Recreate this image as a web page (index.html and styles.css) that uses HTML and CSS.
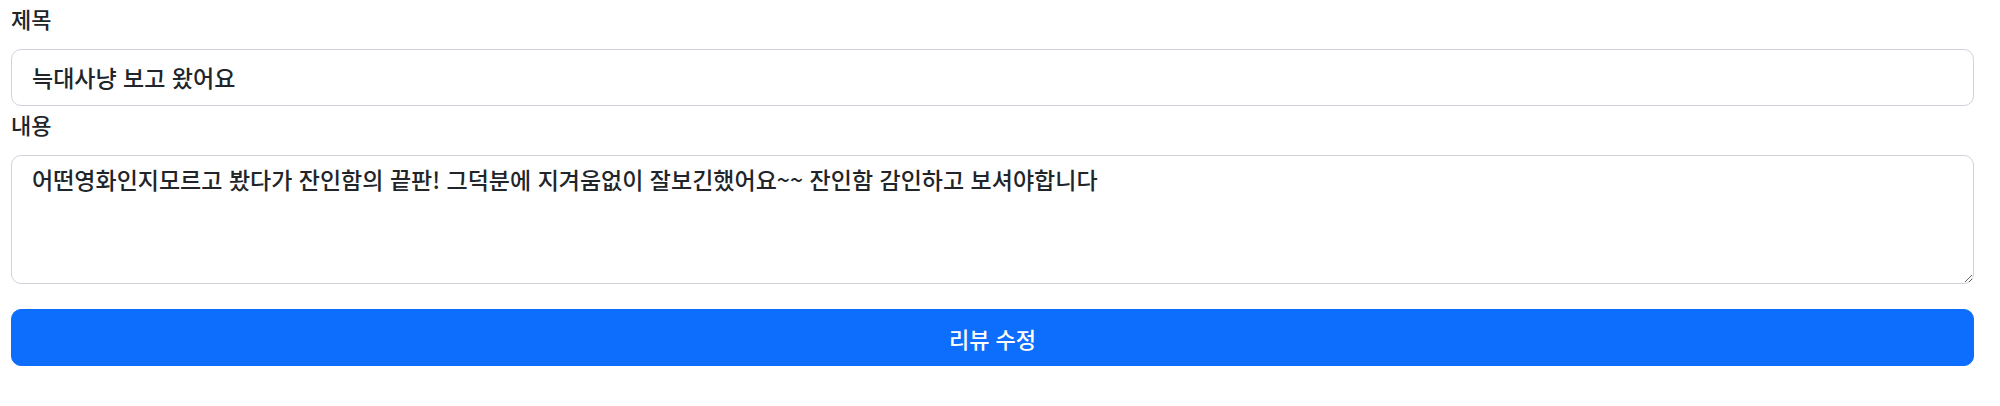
FILE: index.html
```html
<!DOCTYPE html>
<html lang="ko">
<head>
<meta charset="utf-8">
<title>리뷰 수정</title>
<link rel="stylesheet" href="styles.css">
</head>
<body>
<form class="review-form">
  <label class="form-label" for="title">제목</label>
  <input class="form-control" id="title" type="text" value="늑대사냥 보고 왔어요">
  <label class="form-label label-content" for="content">내용</label>
  <textarea class="form-control form-textarea" id="content">어떤영화인지모르고 봤다가 잔인함의 끝판! 그덕분에 지겨움없이 잘보긴했어요~~ 잔인함 감인하고 보셔야합니다</textarea>
  <button class="btn-primary" type="button">리뷰 수정</button>
</form>
</body>
</html>
```
FILE: styles.css
```css
* { box-sizing: border-box; }
html, body {
  margin: 0;
  padding: 0;
  background: #ffffff;
}
body {
  font-family: "Noto Sans CJK KR", "Noto Sans", sans-serif;
  font-size: 23px;
  line-height: 30px;
  color: #212529;
}
.review-form {
  display: flex;
  flex-direction: column;
  width: 1963px;
  margin-left: 11px;
  padding-top: 3px;
}
.form-label {
  display: block;
  height: 30px;
  line-height: 30px;
  font-size: 22px;
  font-weight: 500;
  color: #212529;
}
.label-content { margin-top: 3px; }
.form-control {
  display: block;
  width: 100%;
  margin-top: 16px;
  height: 57px;
  padding: 11px 20px 13px;
  font-family: inherit;
  font-size: 23px;
  font-weight: 500;
  line-height: 30px;
  color: #212529;
  background: #ffffff;
  border: 1px solid #ced4da;
  border-radius: 10px;
  outline: none;
}
.form-textarea {
  height: 129px;
  padding: 8px 20px;
  resize: vertical;
}
.btn-primary {
  display: block;
  width: 100%;
  height: 57px;
  margin-top: 25px;
  font-family: inherit;
  font-size: 22px;
  font-weight: 500;
  line-height: 30px;
  color: #ffffff;
  background: #0d6efd;
  border: 1px solid #0d6efd;
  border-radius: 10px;
  padding: 0;
}
```
